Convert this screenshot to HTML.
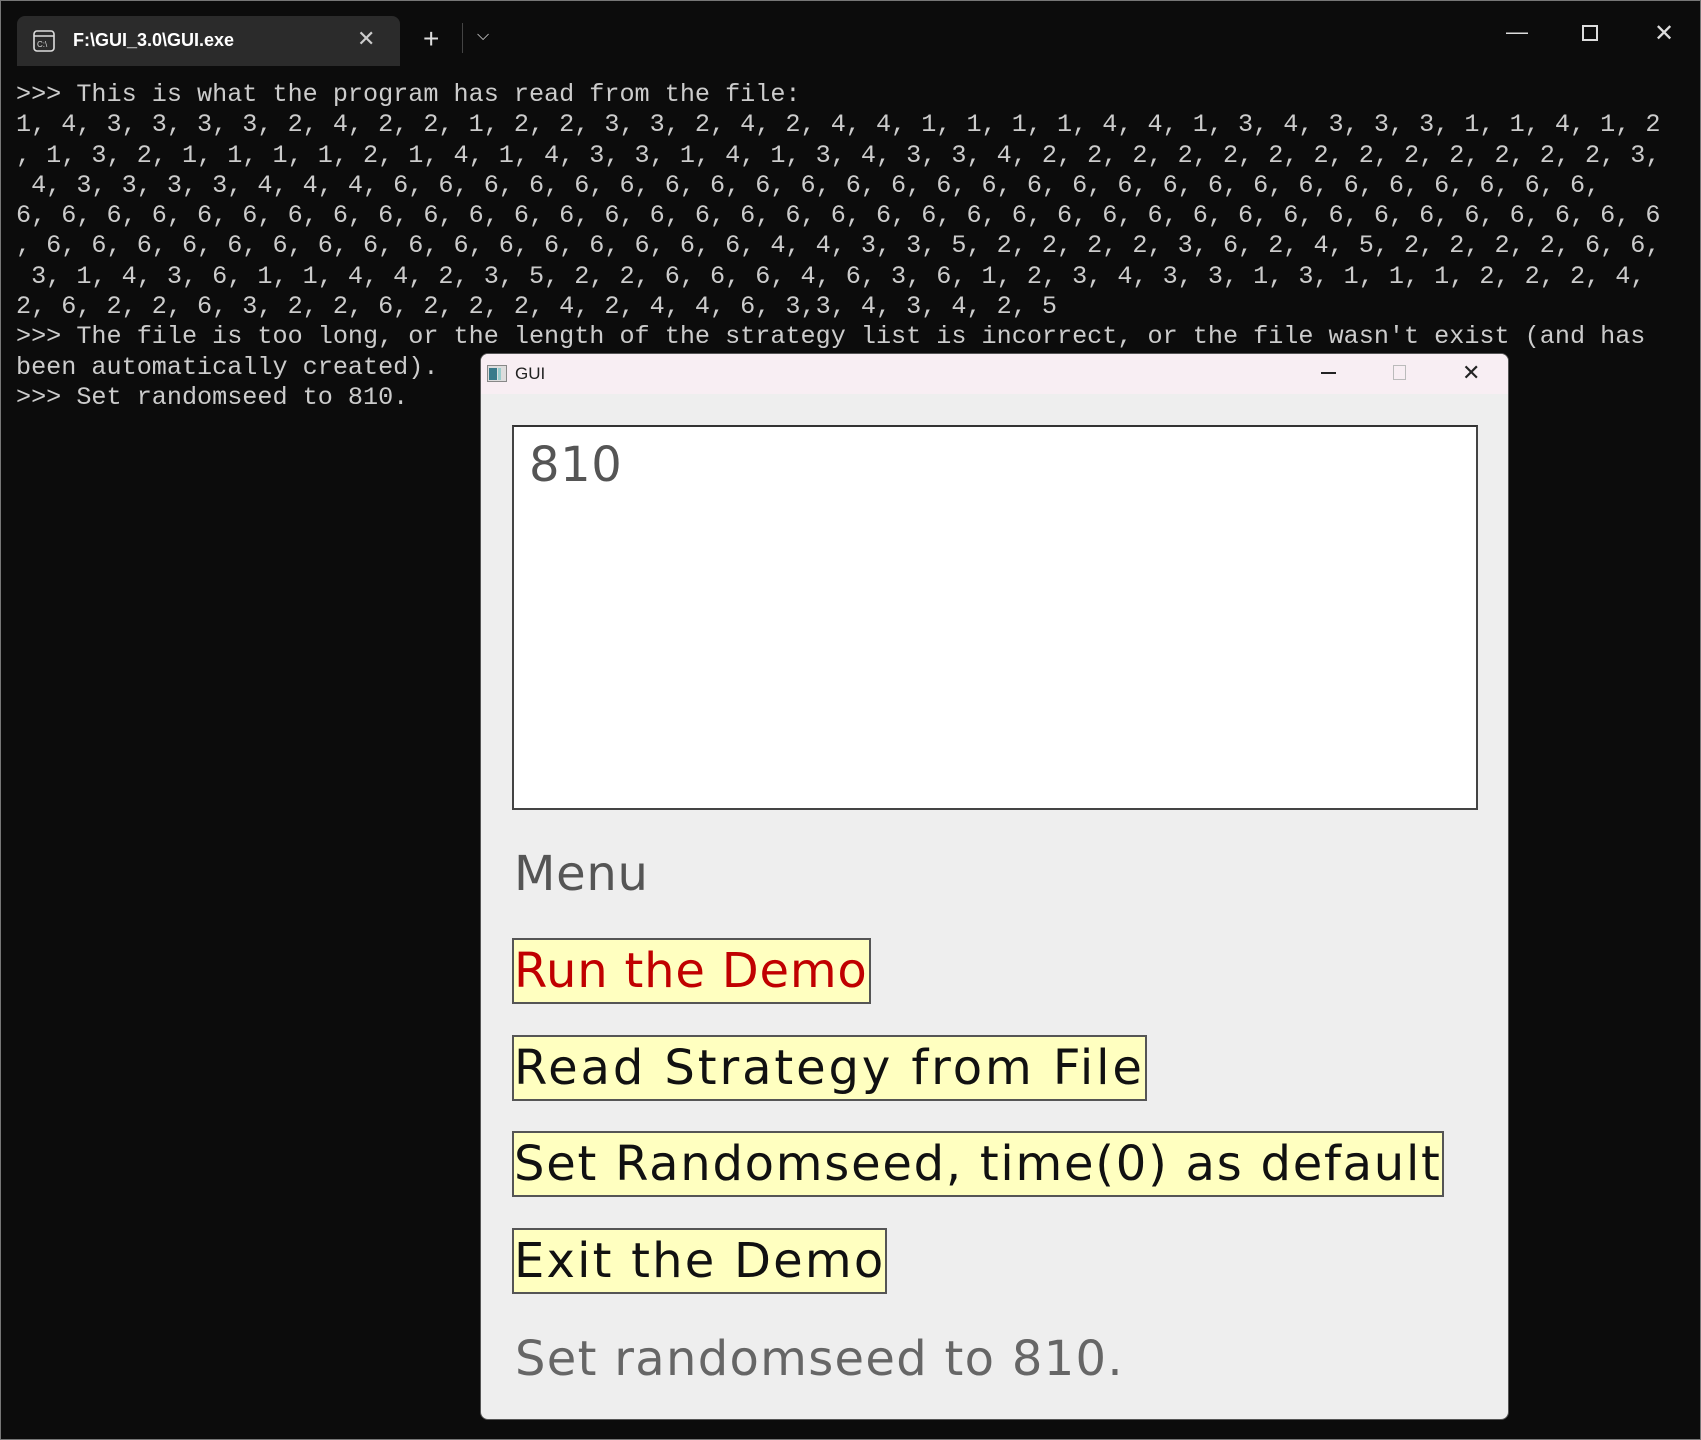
<!DOCTYPE html>
<html><head><meta charset="utf-8"><style>
*{margin:0;padding:0;box-sizing:border-box}
body{width:1701px;height:1440px;background:#0c0c0c;position:relative;overflow:hidden;border:1px solid #777;font-family:"Liberation Sans",sans-serif}
.tab{position:absolute;left:16px;top:15px;width:383px;height:50px;background:#2b2b2b;border-radius:8px 8px 0 0;color:#fff;font-size:18px}
.con{position:absolute;left:15px;top:79px;font-family:"Liberation Mono","DejaVu Sans Mono",monospace;font-size:25.15px;line-height:30.3px;color:#cccccc;white-space:pre}
.ctl{position:absolute;color:#ddd;font-size:22px}
.gui{position:absolute;left:479px;top:352px;width:1029px;height:1067px;background:#eeeeee;border:1px solid #555;border-radius:8px;overflow:hidden}
.tb{height:40px;background:#f8eef3;position:relative;font-size:17px;color:#222}
.box{position:absolute;left:31px;top:71px;width:966px;height:385px;background:#fff;border:2px solid #444;border-top-color:#333}
.cm{font-family:"DejaVu Sans",sans-serif;white-space:nowrap}
.btn{position:absolute;left:31px;height:66px;background:#ffffc0;border:2px solid #555;font-size:48px;line-height:62px;color:#111;padding-left:0;overflow:hidden}
</style></head><body>
<div class="tab">
 <svg style="position:absolute;left:15px;top:13px" width="24" height="24" viewBox="0 0 24 24"><rect x="2" y="2" width="20" height="20" rx="3" fill="none" stroke="#ddd" stroke-width="1.6"/><line x1="2" y1="7" x2="22" y2="7" stroke="#ddd" stroke-width="1.4"/><text x="5" y="18" font-size="8" fill="#ddd" font-family="Liberation Sans">C:\</text></svg>
 <span style="position:absolute;left:56px;top:14px;font-weight:bold">F:\GUI_3.0\GUI.exe</span>
 <span style="position:absolute;left:340px;top:10px;font-size:22px;color:#ccc">✕</span>
</div>
<div class="ctl" style="left:422px;top:22px;font-size:28px">+</div>
<div style="position:absolute;left:461px;top:22px;width:1px;height:30px;background:#444"></div>
<div class="ctl" style="left:476px;top:26px;font-size:16px">⌵</div>
<div class="ctl" style="left:1505px;top:18px">—</div>
<div style="position:absolute;left:1581px;top:24px;width:16px;height:16px;border:2px solid #ddd"></div>
<div class="ctl" style="left:1653px;top:18px;font-size:24px">✕</div>
<div class="con">&gt;&gt;&gt; This is what the program has read from the file:
1, 4, 3, 3, 3, 3, 2, 4, 2, 2, 1, 2, 2, 3, 3, 2, 4, 2, 4, 4, 1, 1, 1, 1, 4, 4, 1, 3, 4, 3, 3, 3, 1, 1, 4, 1, 2
, 1, 3, 2, 1, 1, 1, 1, 2, 1, 4, 1, 4, 3, 3, 1, 4, 1, 3, 4, 3, 3, 4, 2, 2, 2, 2, 2, 2, 2, 2, 2, 2, 2, 2, 2, 3,
 4, 3, 3, 3, 3, 4, 4, 4, 6, 6, 6, 6, 6, 6, 6, 6, 6, 6, 6, 6, 6, 6, 6, 6, 6, 6, 6, 6, 6, 6, 6, 6, 6, 6, 6,
6, 6, 6, 6, 6, 6, 6, 6, 6, 6, 6, 6, 6, 6, 6, 6, 6, 6, 6, 6, 6, 6, 6, 6, 6, 6, 6, 6, 6, 6, 6, 6, 6, 6, 6, 6, 6
, 6, 6, 6, 6, 6, 6, 6, 6, 6, 6, 6, 6, 6, 6, 6, 6, 4, 4, 3, 3, 5, 2, 2, 2, 2, 3, 6, 2, 4, 5, 2, 2, 2, 2, 6, 6,
 3, 1, 4, 3, 6, 1, 1, 4, 4, 2, 3, 5, 2, 2, 6, 6, 6, 4, 6, 3, 6, 1, 2, 3, 4, 3, 3, 1, 3, 1, 1, 1, 2, 2, 2, 4,
2, 6, 2, 2, 6, 3, 2, 2, 6, 2, 2, 2, 4, 2, 4, 4, 6, 3,3, 4, 3, 4, 2, 5
&gt;&gt;&gt; The file is too long, or the length of the strategy list is incorrect, or the file wasn't exist (and has
been automatically created).
&gt;&gt;&gt; Set randomseed to 810.</div>
<div class="gui">
 <div class="tb">
  <svg style="position:absolute;left:6px;top:11px" width="20" height="17"><rect x="0.5" y="0.5" width="19" height="16" fill="#ddd" stroke="#888"/><rect x="2" y="3" width="8" height="12" fill="#3a7a8a"/><rect x="11" y="3" width="3" height="12" fill="#9cc"/></svg>
  <span style="position:absolute;left:34px;top:10px">GUI</span>
  <div style="position:absolute;left:840px;top:18px;width:15px;height:1.5px;background:#222"></div>
  <div style="position:absolute;left:912px;top:11px;width:13px;height:15px;border:1px solid #bbb"></div>
  <span style="position:absolute;left:981px;top:6px;font-size:22px">✕</span>
 </div>
 <div class="box"><span class="cm" style="position:absolute;left:15px;top:10px;font-size:48px;color:#555;letter-spacing:0.6px">810</span></div>
 <div class="cm" style="position:absolute;left:33px;top:492px;font-size:48px;color:#555;letter-spacing:0.7px">Menu</div>
 <div class="btn cm" style="top:584px;width:359px;color:#c00000;letter-spacing:0.8px">Run the Demo</div>
 <div class="btn cm" style="top:681px;width:635px;letter-spacing:2.9px">Read Strategy from File</div>
 <div class="btn cm" style="top:777px;width:932px;letter-spacing:1.75px">Set Randomseed, time(0) as default</div>
 <div class="btn cm" style="top:874px;width:375px;letter-spacing:2.2px">Exit the Demo</div>
 <div class="cm" style="position:absolute;left:34px;top:977px;font-size:48px;color:#666;letter-spacing:1.3px">Set randomseed to 810.</div>
</div>
</body></html>
